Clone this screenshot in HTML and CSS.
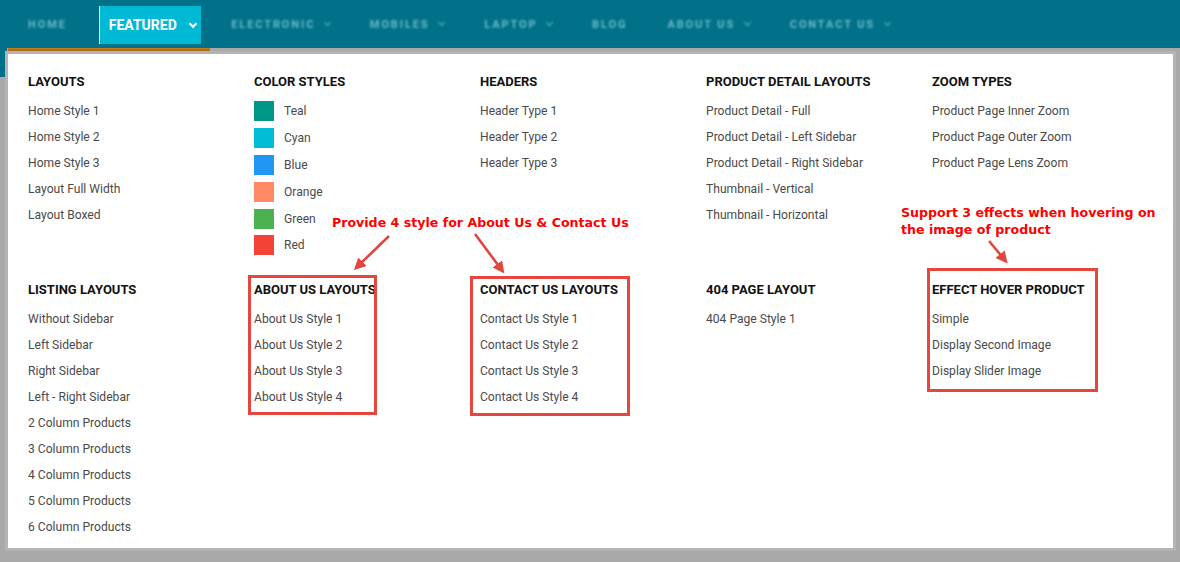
FILE: index.html
```html
<!doctype html>
<html lang="en">
<head>
    <meta charset="utf-8">
    <title>Featured menu</title>
    <link rel="stylesheet" href="styles.css">
</head>
<body>
<div class="page">

    <!--  top navigation  -->
    <div class="nav">
        <span class="navItem">Home</span>
        <span class="navItem active">Featured <i class="caret"></i></span>
        <span class="navItem">Electronic <i class="caret"></i></span>
        <span class="navItem">Mobiles <i class="caret"></i></span>
        <span class="navItem">Laptop <i class="caret"></i></span>
        <span class="navItem">Blog</span>
        <span class="navItem">About Us <i class="caret"></i></span>
        <span class="navItem">Contact Us <i class="caret"></i></span>
    </div>
    <div class="navLine"></div>

    <!--  mega menu  -->
    <div class="mega">
        <div class="menuCol">
            <p class="menuTitle">Layouts</p>
            <p class="menuLink">Home Style 1</p>
            <p class="menuLink">Home Style 2</p>
            <p class="menuLink">Home Style 3</p>
            <p class="menuLink">Layout Full Width</p>
            <p class="menuLink">Layout Boxed</p>
        </div>
        <div class="menuCol">
            <p class="menuTitle">Color Styles</p>
            <p class="colorRow"><span class="swatch teal"></span>Teal</p>
            <p class="colorRow"><span class="swatch cyan"></span>Cyan</p>
            <p class="colorRow"><span class="swatch blue"></span>Blue</p>
            <p class="colorRow"><span class="swatch orange"></span>Orange</p>
            <p class="colorRow"><span class="swatch green"></span>Green</p>
            <p class="colorRow"><span class="swatch red"></span>Red</p>
        </div>
        <div class="menuCol">
            <p class="menuTitle">Headers</p>
            <p class="menuLink">Header Type 1</p>
            <p class="menuLink">Header Type 2</p>
            <p class="menuLink">Header Type 3</p>
        </div>
        <div class="menuCol">
            <p class="menuTitle">Product Detail Layouts</p>
            <p class="menuLink">Product Detail - Full</p>
            <p class="menuLink">Product Detail - Left Sidebar</p>
            <p class="menuLink">Product Detail - Right Sidebar</p>
            <p class="menuLink">Thumbnail - Vertical</p>
            <p class="menuLink">Thumbnail - Horizontal</p>
        </div>
        <div class="menuCol">
            <p class="menuTitle">Zoom Types</p>
            <p class="menuLink">Product Page Inner Zoom</p>
            <p class="menuLink">Product Page Outer Zoom</p>
            <p class="menuLink">Product Page Lens Zoom</p>
        </div>

        <div class="menuCol">
            <p class="menuTitle">Listing Layouts</p>
            <p class="menuLink">Without Sidebar</p>
            <p class="menuLink">Left Sidebar</p>
            <p class="menuLink">Right Sidebar</p>
            <p class="menuLink">Left - Right Sidebar</p>
            <p class="menuLink">2 Column Products</p>
            <p class="menuLink">3 Column Products</p>
            <p class="menuLink">4 Column Products</p>
            <p class="menuLink">5 Column Products</p>
            <p class="menuLink">6 Column Products</p>
        </div>
        <div class="menuCol">
            <p class="menuTitle">About Us Layouts</p>
            <p class="menuLink">About Us Style 1</p>
            <p class="menuLink">About Us Style 2</p>
            <p class="menuLink">About Us Style 3</p>
            <p class="menuLink">About Us Style 4</p>
        </div>
        <div class="menuCol">
            <p class="menuTitle">Contact Us Layouts</p>
            <p class="menuLink">Contact Us Style 1</p>
            <p class="menuLink">Contact Us Style 2</p>
            <p class="menuLink">Contact Us Style 3</p>
            <p class="menuLink">Contact Us Style 4</p>
        </div>
        <div class="menuCol">
            <p class="menuTitle">404 Page Layout</p>
            <p class="menuLink">404 Page Style 1</p>
        </div>
        <div class="menuCol">
            <p class="menuTitle">Effect Hover Product</p>
            <p class="menuLink">Simple</p>
            <p class="menuLink">Display Second Image</p>
            <p class="menuLink">Display Slider Image</p>
        </div>
    </div>

    <!--  screenshot notes drawn on top  -->
    <div class="note noteAbout">Provide 4 style for About Us &amp; Contact Us</div>
    <div class="note noteHover">Support 3 effects when hovering on<br>the image of product</div>
    <div class="markBox boxAbout"></div>
    <div class="markBox boxContact"></div>
    <div class="markBox boxHover"></div>
    <svg class="arrows" width="1180" height="562" viewBox="0 0 1180 562">
        <defs>
            <marker id="head" markerWidth="4.6" markerHeight="4.6" refX="2.4" refY="2.3" orient="auto">
                <path d="M0,0 L4.6,2.3 L0,4.6 Z" fill="#e2463f"/>
            </marker>
        </defs>
        <line x1="389" y1="236" x2="358" y2="266" stroke="#e2463f" stroke-width="2.6" marker-end="url(#head)"/>
        <line x1="475" y1="234" x2="501" y2="269" stroke="#e2463f" stroke-width="2.6" marker-end="url(#head)"/>
        <line x1="989" y1="241" x2="1004" y2="259" stroke="#e2463f" stroke-width="2.6" marker-end="url(#head)"/>
    </svg>
</div>
</body>
</html>
```

FILE: styles.css
```css
* {
    margin: 0;
    padding: 0;
}

html, body {
    background: #a9a9a9;
    font-family: Roboto, "Liberation Sans", sans-serif;
    width: 1180px;
    height: 562px;
    overflow: hidden;
}

.page {
    position: relative;
    height: 100%;
}

/* nav bar */
.nav {
    height: 48px;
    box-sizing: border-box;
    background: #007189;
    display: flex;
    align-items: flex-start;
    padding: 6px 0 0 18px;
    gap: 20px;
}

.nav .navItem {
    height: 38px;
    line-height: 38px;
    padding: 0 10px;
    font-size: 11px;
    font-weight: 700;
    letter-spacing: 1.9px;
    text-transform: uppercase;
    color: #6ab9c8;
    filter: blur(.8px);
    white-space: nowrap;
}

.nav .navItem:first-child {
    margin-right: 2px;
}

.nav .navItem.active {
    background: #00b9d5;
    border-left: 1px solid #fff;
    padding: 0 5px 0 9px;
    color: #fff;
    font-size: 14px;
    letter-spacing: 0;
    filter: none;
}

.caret {
    display: inline-block;
    width: 4px;
    height: 4px;
    border-right: 1.5px solid currentColor;
    border-bottom: 1.5px solid currentColor;
    transform: rotate(45deg);
    margin: 0 0 3px 5px;
}

.nav .active .caret {
    width: 4px;
    height: 4px;
    border-width: 2px;
    margin-left: 10px;
}

.navLine {
    height: 3px;
    width: 202px;
    margin-left: 8px;
    background: linear-gradient(#c77d12, #a0671a);
}

.navLine::before {
    content: "";
    display: block;
    position: absolute;
    left: 0;
    top: 48px;
    width: 7px;
    height: 29px;
    background: #00708a;
}

/* mega menu panel */
.mega {
    position: relative;
    margin: 3px 0 0 8px;
    width: 1165px;
    height: 494px;
    box-sizing: border-box;
    background: #fff;
    box-shadow: 0 0 0 3px #b4b4b4;
    padding: 20px 20px 0;
    display: grid;
    grid-template-columns: repeat(5, 226px);
    grid-template-rows: 184px auto;
    row-gap: 24px;
}

.menuTitle {
    font-size: 13px;
    line-height: 16px;
    font-weight: 700;
    color: #111;
    text-transform: uppercase;
    white-space: nowrap;
    margin-bottom: 8px;
}

.menuLink {
    font-size: 12.1px;
    line-height: 26px;
    color: #4a4a4a;
}

.colorRow {
    display: flex;
    align-items: center;
    height: 26.8px;
    font-size: 12.1px;
    color: #4a4a4a;
}

.swatch {
    width: 20px;
    height: 20px;
    margin-right: 10px;
}

.swatch.teal { background: #009688; }
.swatch.cyan { background: #00bcd4; }
.swatch.blue { background: #2196f3; }
.swatch.orange { background: #ff8a65; }
.swatch.green { background: #4caf50; }
.swatch.red { background: #f44336; }

/* notes over the screenshot */
.note {
    position: absolute;
    color: #ff0000;
    font-family: "DejaVu Sans", Verdana, sans-serif;
    font-weight: 700;
    font-size: 12.6px;
    line-height: 17px;
    white-space: nowrap;
}

.noteAbout {
    left: 332px;
    top: 214px;
}

.noteHover {
    left: 901px;
    top: 204px;
}

.markBox {
    position: absolute;
    border: 3px solid #e5473f;
    box-sizing: border-box;
}

.boxAbout {
    left: 248px;
    top: 275px;
    width: 129px;
    height: 140px;
}

.boxContact {
    left: 470px;
    top: 276px;
    width: 160px;
    height: 140px;
}

.boxHover {
    left: 927px;
    top: 268px;
    width: 171px;
    height: 124px;
}

.arrows {
    position: absolute;
    left: 0;
    top: 0;
    pointer-events: none;
}
```
